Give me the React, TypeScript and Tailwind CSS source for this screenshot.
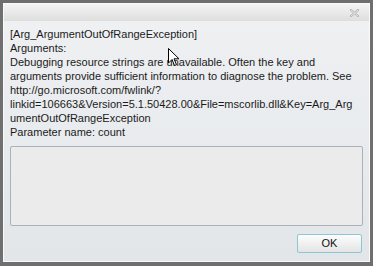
const lines = [
  '[Arg_ArgumentOutOfRangeException]',
  'Arguments:',
  'Debugging resource strings are unavailable. Often the key and',
  'arguments provide sufficient information to diagnose the problem. See',
  'http://go.microsoft.com/fwlink/?',
  'linkid=106663&Version=5.1.50428.00&File=mscorlib.dll&Key=Arg_Arg',
  'umentOutOfRangeException',
  'Parameter name: count',
];

function CloseGlyph() {
  return (
    <svg width="9" height="8" viewBox="0 0 9 8" className="block">
      <path d="M1 1 L8 7 M8 1 L1 7" stroke="#b5b5b5" strokeWidth="2.2" strokeLinecap="square" />
      <path d="M1 1 L8 7 M8 1 L1 7" stroke="#eeeeee" strokeWidth="0.8" />
    </svg>
  );
}

function Cursor() {
  return (
    <svg width="12" height="19" viewBox="0 0 12 19" className="absolute left-[168px] top-[48px]">
      <path d="M0.5 0.5 L0.5 15 L4 11.5 L6.5 17.5 L8.5 16.7 L6 10.8 L11 10.8 Z" fill="#ffffff" stroke="#000000" strokeWidth="1" />
    </svg>
  );
}

export default function App() {
  return (
    <div className="relative w-[373px] h-[266px] bg-[#6f6f6f] p-[3px] pb-[4px] font-['Liberation_Sans',sans-serif]">
      <div className="flex flex-col h-full border border-[#fafafa] bg-gradient-to-b from-[#eff1f3] to-[#e3e6e9]">
        <div className="flex items-center justify-end h-[17px] pr-[10px] bg-gradient-to-b from-[#f4f4f4] to-[#dedede]">
          <CloseGlyph />
        </div>
        <div className="flex flex-col px-[6px] pt-[6px] text-[11px] leading-[14px] text-[#1b1b1b]">
          {lines.map((l) => (
            <div key={l} className="whitespace-nowrap">{l}</div>
          ))}
        </div>
        <div className="mx-[6px] mt-[7px] h-[80px] rounded-[2px] border border-[#aab1b9] bg-[#ebebeb]" />
        <div className="flex justify-end px-[7px] pt-[8px]">
          <button className="w-[65px] h-[19px] rounded-[2px] border border-[#8ec6d8] bg-gradient-to-b from-[#fdfdfd] to-[#e4e4e4] text-[11px] leading-none text-[#111]">
            OK
          </button>
        </div>
      </div>
      <Cursor />
    </div>
  );
}
